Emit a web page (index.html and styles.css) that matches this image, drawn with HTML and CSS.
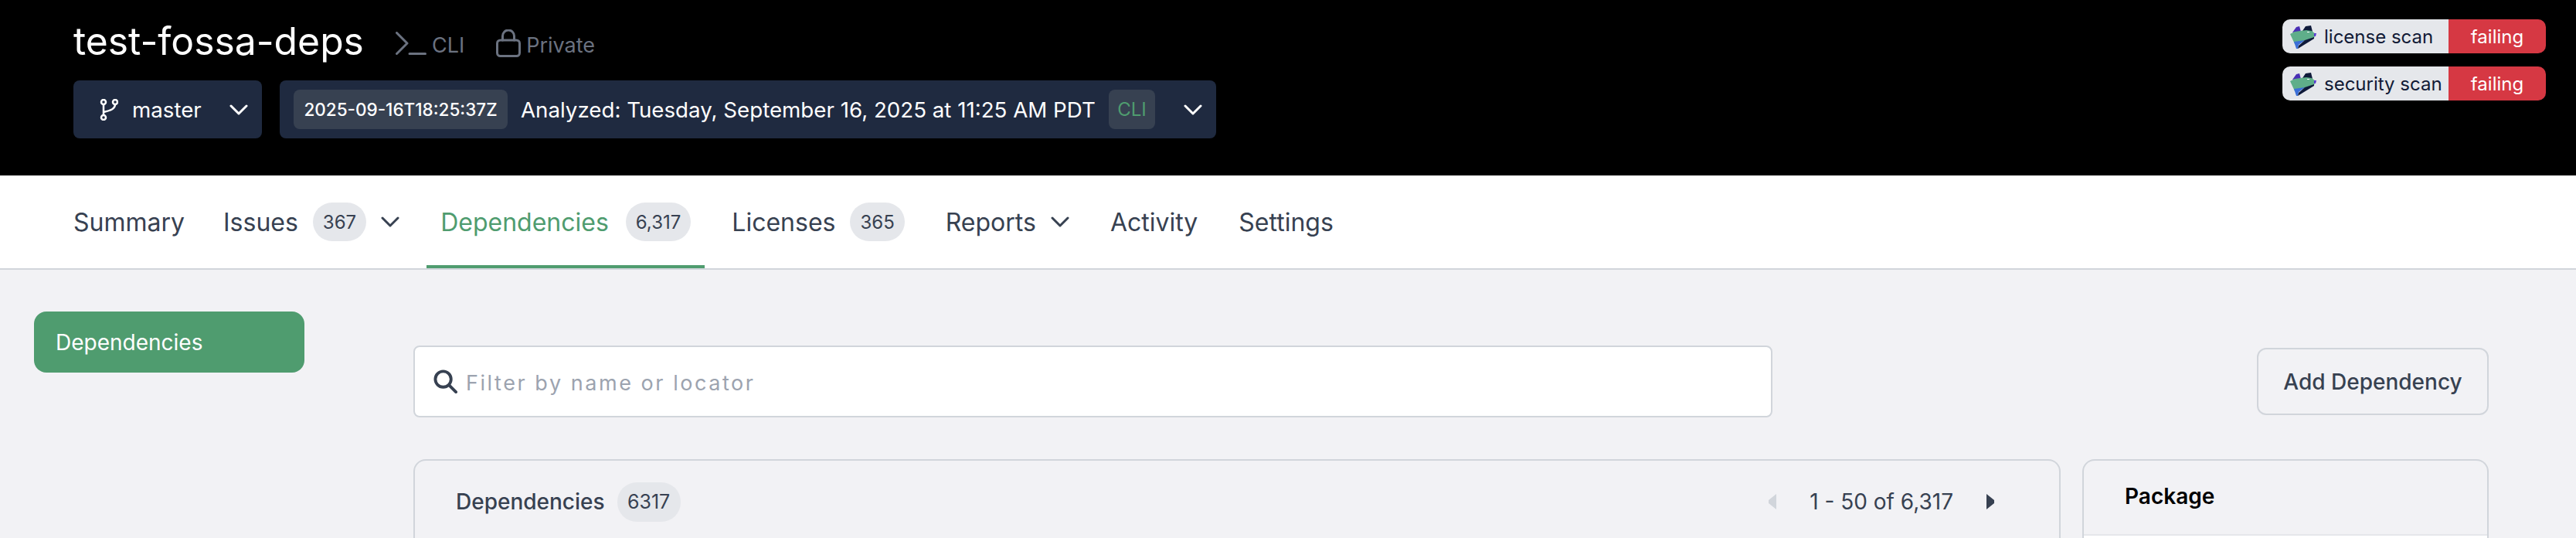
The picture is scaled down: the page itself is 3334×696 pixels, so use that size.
FILE: index.html
```html
<!DOCTYPE html>
<html lang="en">
<head>
    <meta charset="UTF-8">
    <meta name="viewport" content="width=device-width, initial-scale=1.0">
    <title>test-fossa-deps</title>
    <link rel="stylesheet" href="styles.css">
</head>
<body>
    <header class="project-header">
        <div class="project-info">
            <div class="title-row">
                <h1>test-fossa-deps</h1>
                <span class="meta">
                    <svg class="meta-icon" width="40" height="30" viewBox="0 0 40 30"><path d="M1.500 1.500L15 15 1.500 28.500M18 28.500h20.500"/></svg>
                    <span class="meta-text">CLI</span>
                </span>
                <span class="meta">
                    <svg class="meta-icon" width="32" height="36" viewBox="0 0 32 36"><rect x="1.500" y="14" width="29" height="20.500" rx="4"/><path d="M8.500 14V8.500a7.500 7.500 0 0 1 15 0V14"/></svg>
                    <span class="meta-text">Private</span>
                </span>
            </div>
            <div class="select-row">
                <div class="select branch">
                    <svg class="branch-icon" width="24" height="28" viewBox="0 0 24 28"><circle cx="5" cy="4" r="3"/><circle cx="20" cy="4" r="3"/><circle cx="5" cy="24" r="3"/><path d="M5 7v14M20 7c0 6-6 8-15 10"/></svg>
                    <span>master</span>
                    <svg class="chevron" width="24" height="14" viewBox="0 0 24 14"><path d="M2 2l10 10L22 2"/></svg>
                </div>
                <div class="select revision">
                    <span class="chip">2025-09-16T18:25:37Z</span>
                    <span class="analyzed">Analyzed: Tuesday, September 16, 2025 at 11:25 AM PDT</span>
                    <span class="chip chip-green">CLI</span>
                    <svg class="chevron" width="24" height="14" viewBox="0 0 24 14"><path d="M2 2l10 10L22 2"/></svg>
                </div>
            </div>
        </div>
        <div class="badges">
            <div class="badge">
                <span class="badge-label">
                    <svg width="34" height="31" viewBox="0 0 34 31"><use href="#fossa-logo"/></svg>
                    license scan
                </span>
                <span class="badge-status">failing</span>
            </div>
            <div class="badge">
                <span class="badge-label">
                    <svg width="34" height="31" viewBox="0 0 34 31"><use href="#fossa-logo"/></svg>
                    security scan
                </span>
                <span class="badge-status">failing</span>
            </div>
        </div>
    </header>

    <nav class="tabs">
        <a class="tab">Summary</a>
        <a class="tab">Issues <span class="count">367</span>
            <svg class="chevron" width="24" height="14" viewBox="0 0 24 14"><path d="M2 2l10 10L22 2"/></svg>
        </a>
        <a class="tab active">Dependencies <span class="count">6,317</span></a>
        <a class="tab">Licenses <span class="count">365</span></a>
        <a class="tab">Reports
            <svg class="chevron" width="24" height="14" viewBox="0 0 24 14"><path d="M2 2l10 10L22 2"/></svg>
        </a>
        <a class="tab">Activity</a>
        <a class="tab">Settings</a>
    </nav>

    <main class="page">
        <aside class="sidebar">
            <a class="side-link">Dependencies</a>
        </aside>
        <section class="content">
            <div class="toolbar">
                <div class="search">
                    <svg class="search-icon" width="31" height="31" viewBox="0 0 32 32"><circle cx="13" cy="13" r="10.500"/><path d="M21 21l9 9"/></svg>
                    <span class="placeholder">Filter by name or locator</span>
                </div>
                <button class="add-btn">Add Dependency</button>
            </div>
            <div class="panels">
                <div class="panel panel-main">
                    <div class="panel-head">
                        <span class="panel-title">Dependencies</span>
                        <span class="count count-panel">6317</span>
                        <div class="pager">
                            <svg width="13" height="20" viewBox="0 0 13 20"><path class="arrow-off" d="M12 0v20L2 12V8z"/></svg>
                            <span>1 - 50 of 6,317</span>
                            <svg width="13" height="20" viewBox="0 0 13 20"><path class="arrow-on" d="M1 0v20l10-8V8z"/></svg>
                        </div>
                    </div>
                </div>
                <div class="panel panel-side">
                    <div class="side-head">Package</div>
                    <div class="side-body"></div>
                </div>
            </div>
        </section>
    </main>

    <svg class="defs" width="0" height="0">
        <symbol id="fossa-logo" viewBox="0 0 34 31">
            <path fill="#0f1a3a" d="M16 8l4-6 7-1 2 8z"/>
            <path fill="#4a2fb5" d="M3 10l5-7 4-1 2 7z"/>
            <path fill="#5fae8a" d="M0 12l6-3 7-1 8-1 7 1 5 4-2 5-12 4-11 2-2 2z"/>
            <path fill="#3b6fd8" d="M5 22l14-2-8 6-1 5H8z"/>
            <path fill="#0f1a3a" d="M10 31l1-4 8-7 12-4v2z"/>
            <path fill="#5a3bd0" d="M31 11h3l-1 4h-2z"/>
            <path fill="#fff" d="M22 9h3v1h-3z"/>
        </symbol>
    </svg>
</body>
</html>
```

FILE: styles.css
```css
* {
    box-sizing: border-box;
}
html, body {
    margin: 0;
    height: 100%;
    overflow: hidden;
}
body {
    font-family: Inter, "Liberation Sans", sans-serif;
    background-color: #f2f2f5;
    color: #374151;
}
svg {
    flex: none;
}
.defs {
    position: absolute;
}

/* header */
.project-header {
    height: 227px;
    background-color: #000;
    padding: 25px 39px 0 95px;
    display: flex;
    justify-content: space-between;
    align-items: flex-start;
}
.title-row {
    display: flex;
    align-items: center;
    height: 56px;
}
.title-row h1 {
    margin: 0 41px 0 0;
    color: #fff;
    font-size: 49.800px;
    font-weight: 400;
    line-height: 56px;
}
.meta {
    display: flex;
    align-items: center;
    gap: 7px;
    color: #6b7280;
    font-size: 27px;
    margin-right: 41px;
    padding-top: 6px;
}
.meta-text {
    padding-top: 4px;
}
.meta-icon {
    fill: none;
    stroke: #6b7280;
    stroke-width: 3;
    stroke-linecap: round;
    stroke-linejoin: round;
}
.select-row {
    display: flex;
    gap: 23px;
    margin-top: 23px;
}
.select {
    height: 75px;
    background-color: #1f2a40;
    border-radius: 8px;
    color: #fff;
    font-size: 27.700px;
    display: flex;
    align-items: center;
}
.chevron {
    fill: none;
    stroke: currentColor;
    stroke-width: 3;
    stroke-linecap: round;
    stroke-linejoin: round;
}
.branch {
    width: 244px;
    padding: 0 18px 0 34px;
}
.branch-icon {
    fill: none;
    stroke: #fff;
    stroke-width: 2.500;
    margin-right: 18px;
}
.branch .chevron {
    margin-left: auto;
}
.revision {
    width: 1212px;
    padding: 0 18px;
}
.chip {
    height: 51px;
    width: 277px;
    background-color: #374151;
    border-radius: 8px;
    display: flex;
    align-items: center;
    justify-content: center;
    font-size: 22.500px;
    font-weight: 500;
    flex: none;
}
.chip-green {
    width: 60px;
    color: #4f9c6f;
    font-size: 24px;
    font-weight: 400;
}
.analyzed {
    margin-left: 17px;
    flex: 1;
    white-space: nowrap;
}
.revision .chevron {
    margin-left: 37px;
}

/* status badges */
.badges {
    display: flex;
    flex-direction: column;
    gap: 17px;
}
.badge {
    width: 341px;
    height: 44px;
    display: flex;
    border-radius: 10px;
    overflow: hidden;
    font-size: 24px;
}
.badge-label {
    width: 215px;
    background-color: #e5e7eb;
    color: #111a36;
    display: flex;
    align-items: center;
    gap: 10px;
    padding-left: 10px;
    white-space: nowrap;
}
.badge-status {
    flex: 1;
    background-color: #d63843;
    color: #fff;
    display: flex;
    align-items: center;
    justify-content: center;
}

/* tabs */
.tabs {
    height: 122px;
    background-color: #fff;
    border-bottom: 2px solid #d1d5db;
    padding: 0 0 0 95px;
    display: flex;
    gap: 18px;
}
.tab {
    height: 120px;
    margin-right: 35px;
    display: flex;
    align-items: center;
    font-size: 32px;
    font-weight: 400;
    color: #374151;
}
.tab:first-child {
    margin-right: 32px;
}
.tab.active {
    color: #4f9c6f;
    border-bottom: 4px solid #4f9c6f;
    padding: 4px 18px 0;
    margin: 0 17px 0 -18px;
}
.tab.active .count {
    margin-left: 22px;
}
.tab .chevron {
    margin-left: 19px;
}
.count {
    margin-left: 19px;
    min-width: 66px;
    height: 50px;
    padding: 0 13px;
    border-radius: 25px;
    background-color: #e5e7eb;
    color: #374151;
    display: flex;
    align-items: center;
    justify-content: center;
    font-size: 24px;
}

/* page body */
.page {
    display: flex;
    padding: 54px 113px 0 44px;
}
.sidebar {
    width: 350px;
    flex: none;
}
.side-link {
    display: flex;
    align-items: center;
    height: 79px;
    padding: 0 28px;
    border-radius: 16px;
    background-color: #4f9c6f;
    color: #fff;
    font-size: 28px;
    font-weight: 400;
}
.content {
    flex: 1;
    margin-left: 141px;
}
.toolbar {
    display: flex;
    justify-content: space-between;
    align-items: center;
    margin-top: 44px;
}
.search {
    width: 1759px;
    height: 93px;
    background-color: #fff;
    border: 2px solid #d1d5db;
    border-radius: 8px;
    display: flex;
    align-items: center;
    padding: 0 22px 0 24px;
    gap: 11px;
}
.search-icon {
    fill: none;
    stroke: #374151;
    stroke-width: 4;
    stroke-linecap: round;
}
.placeholder {
    color: #9ca3af;
    font-size: 27px;
    letter-spacing: 2.550px;
    padding-top: 4px;
}
.add-btn {
    width: 300px;
    height: 87px;
    background-color: transparent;
    border: 2px solid #d1d5db;
    border-radius: 12px;
    color: #374151;
    font-family: inherit;
    font-size: 28px;
    font-weight: 500;
}
.panels {
    display: flex;
    gap: 28px;
    margin-top: 54px;
}
.panel {
    height: 102px;
    border: 2px solid #d1d5db;
    border-bottom: 0;
    border-radius: 16px 16px 0 0;
}
.panel-main {
    width: 2132px;
}
.panel-side {
    width: 526px;
    overflow: hidden;
}
.panel-head {
    display: flex;
    align-items: center;
    height: 106px;
    padding: 0 82px 0 53px;
}
.panel-title {
    font-size: 28px;
    font-weight: 500;
}
.count-panel {
    margin: 0 0 0 16px;
    min-width: 82px;
    height: 51px;
    font-size: 25px;
}
.pager {
    margin-left: auto;
    display: flex;
    align-items: center;
    gap: 42px;
    font-size: 28px;
}
.arrow-off {
    fill: #d1d5db;
}
.arrow-on {
    fill: #374151;
}
.side-head {
    height: 97px;
    padding: 0 0 4px 53px;
    display: flex;
    align-items: center;
    border-bottom: 2px solid #e5e7eb;
    color: #000;
    font-size: 28px;
    font-weight: 600;
}
.side-body {
    height: 100%;
    background-color: #fff;
}
```
